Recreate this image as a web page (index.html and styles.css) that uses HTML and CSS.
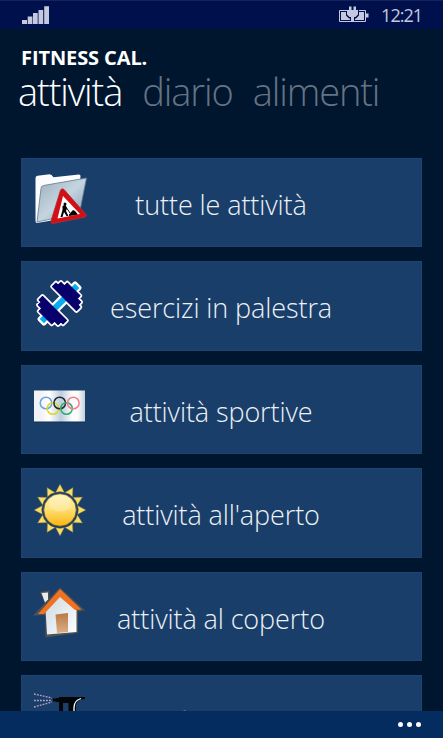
FILE: index.html
```
<!DOCTYPE html>
<html lang="it">
<head>
<meta charset="UTF-8">
<meta name="viewport" content="width=device-width, initial-scale=1.0">
<title>Fitness Cal.</title>
<link rel="stylesheet" href="styles.css">
</head>
<body>
<div class="status-bar">
  <svg class="signal" width="27" height="18" viewBox="0 0 27 18" fill="#c5c9df">
    <path d="M0 14h5v4H0zM5.700 10.500h4.700V18H5.700zM11 7h4.700v11H11zM16.500 4h4.700v14h-4.700zM22.200 0.300H27V18h-4.800z"/>
  </svg>
  <div class="status-right">
    <svg width="31" height="18" viewBox="0 0 31 18">
      <path d="M9 4.500H1.500v11h26v-11H21" fill="none" stroke="#c5c9df"/>
      <path d="M28 7.500h2.500v4H28zM3 6h5v3.500l3 3h1V14H3zM26 6h-5v3.500l-3 3h-1V14h9zM9 4h2V0.500h2.500V4h2V0.500H18V4h2v4.500L17.500 11H16v5h-3v-5h-1.500L9 8.500z" fill="#c5c9df"/>
    </svg>
    <span class="clock">12:21</span>
  </div>
</div>

<div class="header">
  <h1>FITNESS CAL.</h1>
  <div class="tabs">
    <span class="tab active">attività</span>
    <span class="tab">diario</span>
    <span class="tab">alimenti</span>
  </div>
</div>

<div class="list">
  <div class="tile">
    <!-- folder -->
    <svg class="icon" width="56" height="56" viewBox="0 0 56 56">
      <defs>
        <linearGradient id="folder" x1="0" y1="0" x2="1" y2="1">
          <stop offset="0" stop-color="#9caebb"/><stop offset=".5" stop-color="#c4d5e0"/><stop offset="1" stop-color="#7d99b4"/>
        </linearGradient>
      </defs>
      <path d="M3.500 7q0-2 2-2.300l12-1.500q2 0 4 3L47 3.500q1.500 0 1.500 1.500L46 45 5 52q-1.500 0-1.500-2z" fill="#fbfcfd"/>
      <path d="M9 17.500Q9 15 11.500 14.500L54.500 7l-7 35L5 51z" fill="url(#folder)" stroke="#63788d" stroke-width=".8"/>
      <path d="M28.500 19q2-2.500 4 0l21.500 24.500q1 2-1 2.600l-32 6.400q-2.500 0-2-2.600z" fill="#d40e14" stroke="#a9313a" stroke-width=".8"/>
      <path d="M31 25l17 18-22.500 4.500z" fill="#fff"/>
      <circle cx="33" cy="33" r="1.500"/>
      <path d="M30.500 35l3-1.500 1.500 4-1 2.500 2.500 5h-2l-2.500-4-1.500 5h-2l2-7zM37 43.500l4-4.500 2 1 3 3.500-9 1.500z"/>
      <path d="M34 36l4 6" stroke="#111"/>
    </svg>
    <span class="label">tutte le attività</span>
  </div>
  <div class="tile">
    <!-- dumbbell -->
    <svg class="icon" width="56" height="56" viewBox="0 0 56 56">
      <g transform="translate(27.500 28.500) rotate(-45)" stroke-linejoin="round">
        <g fill="#fff" stroke="#fff" stroke-width="4.500">
          <path d="M-25-3h50v6h-50z"/>
          <path d="M-20-9h4v-5h4v-3h5v34h-5v-3h-4V9h-4zM7-17h5v3h4v5h4V9h-4v5h-4v3H7z"/>
        </g>
        <path d="M-25-3h50v6h-50z" fill="#08adf1"/>
        <path d="M-20-9h4v-5h4v-3h5v34h-5v-3h-4V9h-4zM7-17h5v3h4v5h4V9h-4v5h-4v3H7z" fill="#07006c" stroke="#07006c"/>
      </g>
    </svg>
    <span class="label">esercizi in palestra</span>
  </div>
  <div class="tile">
    <!-- olympic flag -->
    <svg class="icon" width="56" height="56" viewBox="0 0 56 56">
      <defs>
        <linearGradient id="flag">
          <stop offset="0" stop-color="#f2f3f4"/><stop offset=".13" stop-color="#f1f2f4"/><stop offset=".3" stop-color="#fff"/><stop offset=".53" stop-color="#bccddd"/><stop offset=".75" stop-color="#fdfdfd"/><stop offset=".86" stop-color="#fafbfc"/><stop offset="1" stop-color="#c2d0dd"/>
        </linearGradient>
      </defs>
      <path d="M2 13h51v31.500H2z" fill="#102d50"/>
      <path d="M2 12.500h51v31H2z" fill="url(#flag)"/>
      <g fill="none" stroke-width="1.500">
        <circle cx="14" cy="25" r="5.800" stroke="#69a5df"/>
        <circle cx="21" cy="30.500" r="5.800" stroke="#e0d629"/>
        <circle cx="27.700" cy="25" r="5.800" stroke="#252931"/>
        <circle cx="34.500" cy="30.500" r="5.800" stroke="#32ae6c"/>
        <circle cx="41.300" cy="25" r="5.800" stroke="#f67e8b"/>
      </g>
    </svg>
    <span class="label">attività sportive</span>
  </div>
  <div class="tile">
    <!-- sun -->
    <svg class="icon" width="56" height="56" viewBox="0 0 56 56">
      <defs>
        <linearGradient id="sun" x1="0" y1="0" x2="0" y2="1">
          <stop offset="0" stop-color="#fff1ae"/><stop offset=".45" stop-color="#fde27a"/><stop offset="1" stop-color="#feb40c"/>
        </linearGradient>
        <path id="ray" d="M23.500 10.500L28 2l4.500 8.500q-4.500-1.500-9 0z"/>
      </defs>
      <g fill="#f9dc62" stroke="#5c5b43" stroke-width=".5">
        <use href="#ray"/>
        <use href="#ray" transform="rotate(30 28 28)"/>
        <use href="#ray" transform="rotate(60 28 28)"/>
        <use href="#ray" transform="rotate(90 28 28)"/>
        <use href="#ray" transform="rotate(120 28 28)"/>
        <use href="#ray" transform="rotate(150 28 28)"/>
        <use href="#ray" transform="rotate(180 28 28)"/>
        <use href="#ray" transform="rotate(210 28 28)"/>
        <use href="#ray" transform="rotate(240 28 28)"/>
        <use href="#ray" transform="rotate(270 28 28)"/>
        <use href="#ray" transform="rotate(300 28 28)"/>
        <use href="#ray" transform="rotate(330 28 28)"/>
      </g>
      <circle cx="28" cy="28" r="16.300" fill="url(#sun)" stroke="#4b4a3e" stroke-width=".8"/>
      <ellipse cx="28" cy="21.500" rx="11" ry="8" fill="#fff" opacity=".25"/>
    </svg>
    <span class="label">attività all'aperto</span>
  </div>
  <div class="tile">
    <!-- house -->
    <svg class="icon" width="56" height="56" viewBox="0 0 56 56">
      <defs>
        <linearGradient id="wall" x1="0" y1="0" x2="1" y2="1">
          <stop offset="0" stop-color="#cbd8e0"/><stop offset="1" stop-color="#fff"/>
        </linearGradient>
        <linearGradient id="door" x1="0" y1="0" x2="0" y2="1">
          <stop offset="0" stop-color="#b97a47"/><stop offset="1" stop-color="#dcae87"/>
        </linearGradient>
      </defs>
      <path d="M8 7l9.500-1.500v10l-4 4z" fill="#4f5352"/>
      <path d="M9.500 8l6.500-.500v7l-3 3z" fill="#e8edf0"/>
      <path d="M28 2.500L53 25.500l-7 1V48L13.500 52.500V30L1 30.500z" fill="#4f5352"/>
      <path d="M28 10l16.500 15v22L15 49.500l-1.500-24z" fill="url(#wall)"/>
      <path d="M28 4l21.500 20.500-6.500.500L28 12 12 29H6z" fill="#f0711f"/>
      <path d="M23.500 29.500L36 28v19l-11 1z" fill="url(#door)"/>
    </svg>
    <span class="label">attività al coperto</span>
  </div>
  <div class="tile">
    <!-- spray gun -->
    <svg class="icon" width="56" height="56" viewBox="0 0 56 56">
      <path d="M2 5l18 4M2 11.500h18M2 18l18-5" fill="none" stroke="#b7a4c7" stroke-width="1.300" stroke-dasharray="1.800 1.200"/>
      <path d="M21 9.500h3v3h-3zM24 9h3v4h-3zM27 8h26v2q-8 0-9 6v26H32V14h-1v13h-4z" fill="#030609"/>
      <path d="M31 14h5.500v14H31z" fill="#1b3e6a"/>
      <path d="M49 9.500q-7 2-7 9v9" fill="none" stroke="#fff" stroke-width="1.300"/>
    </svg>
    <span class="label">attività casalinghe</span>
  </div>
</div>

<div class="app-bar">
  <span class="dot"></span>
  <span class="dot"></span>
  <span class="dot"></span>
</div>
</body>
</html>
```

FILE: styles.css
```
* {
  box-sizing: border-box;
}
body {
  margin: 0;
  height: 738px;
  display: flex;
  flex-direction: column;
  overflow: hidden;
  background-color: #00162f;
  color: white;
  font-family: "Open Sans", "Noto Sans", sans-serif;
}
.status-bar {
  height: 29px;
  flex: none;
  display: flex;
  justify-content: space-between;
  padding: 5px 21px 0 22px;
  background-color: #00104d;
  border-top: 1px solid #14235a;
}
.status-right {
  display: flex;
  gap: 12px;
}
.clock {
  color: #c5c9df;
  font-size: 18px;
  line-height: 19px;
  letter-spacing: -1px;
}
.header {
  height: 128.500px;
  flex: none;
  padding-top: 16px;
}
h1 {
  margin: 0 0 0 21px;
  font-size: 20px;
  font-weight: 700;
  line-height: 25px;
  letter-spacing: -0.1px;
}
.tabs {
  display: flex;
  gap: 20px;
  padding-left: 18px;
  line-height: 42px;
  font-size: 38px;
  font-weight: 300;
  letter-spacing: -1.1px;
}
.tab {
  color: #667382;
  white-space: nowrap;
}
.active {
  color: white;
}
.list {
  flex: 1;
  min-height: 0;
  overflow: hidden;
  padding: 0 21px;
  display: flex;
  flex-direction: column;
  gap: 14px;
}
.tile {
  flex: none;
  height: 89.500px;
  display: flex;
  align-items: center;
  background-color: #1a3e6a;
  border: 1px solid #1d4472;
}
.icon {
  flex: none;
  margin: -6px 0 0 10px;
}
.label {
  flex: 1;
  margin: 4px 67px 0 0;
  text-align: center;
  font-size: 27px;
  font-weight: 300;
  letter-spacing: -0.1px;
  color: #edf1f5;
  white-space: nowrap;
}
.app-bar {
  height: 27px;
  flex: none;
  display: flex;
  justify-content: flex-end;
  align-items: center;
  gap: 4px;
  padding-right: 22px;
  background-color: #042c5e;
}
.dot {
  width: 5px;
  height: 5px;
  border-radius: 50%;
  background-color: white;
}
```
